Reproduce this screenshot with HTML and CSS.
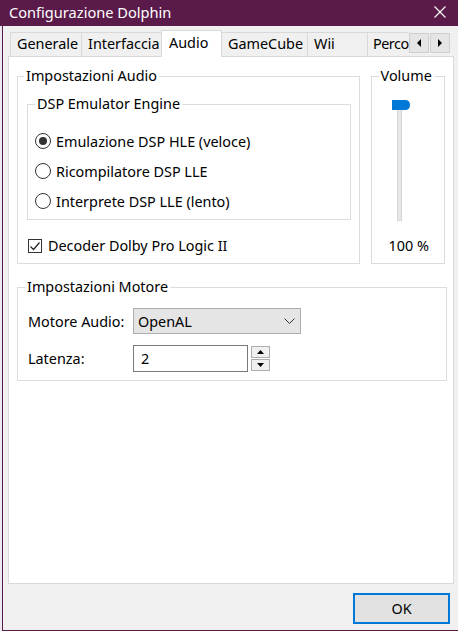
FILE: index.html
```html
<!DOCTYPE html>
<html>
<head>
<meta charset="utf-8">
<link rel="stylesheet" href="styles.css">
</head>
<body>
<div class="window">
  <div class="titlebar">
    <span class="title">Configurazione Dolphin</span>
    <svg class="close" width="12" height="12" viewBox="0 0 12 12"><path d="M0.5 0.5 L11.5 11.5 M11.5 0.5 L0.5 11.5" stroke="#fff" stroke-width="1.1" fill="none"/></svg>
  </div>
  <div class="client">
    <div class="tabs">
      <div class="tab t-gen">Generale</div>
      <div class="tab t-int">Interfaccia</div>
      <div class="tab active t-aud">Audio</div>
      <div class="tab t-gc">GameCube</div>
      <div class="tab t-wii">Wii</div>
      <div class="tab t-per">Perco</div>
      <div class="scroll">
        <div class="sbtn"><svg width="6" height="8" viewBox="0 0 6 8"><path d="M5 0 L5 8 L1 4 Z" fill="#000"/></svg></div>
        <div class="sbtn"><svg width="6" height="8" viewBox="0 0 6 8"><path d="M1 0 L1 8 L5 4 Z" fill="#000"/></svg></div>
      </div>
    </div>
    <div class="panel">
      <div class="row1">
        <fieldset class="gb audio">
          <legend>Impostazioni Audio</legend>
          <fieldset class="gb dsp">
            <legend>DSP Emulator Engine</legend>
            <div class="radio"><span class="rcircle on"></span>Emulazione DSP HLE (veloce)</div>
            <div class="radio"><span class="rcircle"></span>Ricompilatore DSP LLE</div>
            <div class="radio"><span class="rcircle"></span>Interprete DSP LLE (lento)</div>
          </fieldset>
          <div class="check"><span class="cbox"><svg width="12" height="12" viewBox="0 0 12 12"><path d="M1.5 6.5 L4.5 9.5 L10.5 2.5" stroke="#222" stroke-width="1.2" fill="none"/></svg></span>Decoder Dolby Pro Logic II</div>
        </fieldset>
        <fieldset class="gb volume">
          <legend>Volume</legend>
          <div class="slider">
            <div class="track"></div>
            <svg class="thumb" width="19" height="10" viewBox="0 0 19 10"><path d="M0 0 H13 Q18 0 18 5 Q18 10 13 10 H0 Z" fill="#0078d7"/></svg>
          </div>
          <div class="pct">100 %</div>
        </fieldset>
      </div>
      <fieldset class="gb motore">
        <legend>Impostazioni Motore</legend>
        <div class="frow">
          <span class="lbl">Motore Audio:</span>
          <div class="select"><span>OpenAL</span><svg width="11" height="7" viewBox="0 0 11 7"><path d="M0.5 0.5 L5.5 5.5 L10.5 0.5" stroke="#333" stroke-width="1" fill="none"/></svg></div>
        </div>
        <div class="frow">
          <span class="lbl">Latenza:</span>
          <div class="input">2</div>
          <div class="spin">
            <div class="sp"><svg width="7" height="4" viewBox="0 0 7 4"><path d="M0 4 L7 4 L3.5 0 Z" fill="#000"/></svg></div>
            <div class="sp"><svg width="7" height="4" viewBox="0 0 7 4"><path d="M0 0 L7 0 L3.5 4 Z" fill="#000"/></svg></div>
          </div>
        </div>
      </fieldset>
    </div>
    <div class="footer">
      <button class="ok">OK</button>
    </div>
  </div>
</div>
</body>
</html>
```

FILE: styles.css
```css
* { box-sizing: border-box; }
html, body { margin: 0; padding: 0; }
body {
  width: 458px;
  height: 631px;
  background: #e9e9ef;
  font-family: "Noto Sans", "Open Sans", sans-serif;
  font-size: 14.4px;
  color: #000;
  overflow: hidden;
}
.window {
  display: flex;
  flex-direction: column;
  height: 631px;
  margin-left: 2px;
}
.titlebar {
  height: 26px;
  background: #5b1b4a;
  display: flex;
  align-items: center;
  justify-content: space-between;
  padding: 0 11px 2px 9px;
  margin-left: -2px;
}
.title {
  color: #fff;
  font-size: 14.6px;
}
.close { margin-right: 1px; }
.client {
  flex: 1;
  background: #f0f0f0;
  border-left: 1px solid #5b1b4a;
  border-bottom: 1px solid #5b1b4a;
  display: flex;
  flex-direction: column;
}
.tabs {
  display: flex;
  align-items: flex-end;
  height: 30px;
  padding-left: 7px;
  position: relative;
  z-index: 1;
}
.tab {
  height: 24px;
  border: 1px solid #d9d9d9;
  border-right: none;
  border-bottom: none;
  background: #f0f0f0;
  padding: 0 0 0 6px;
  line-height: 22px;
  white-space: nowrap;
  overflow: hidden;
}
.t-gen { width: 71px; }
.t-int { width: 80px; }
.t-aud {
  width: 61px;
  height: 27px;
  background: #fff;
  border-right: 1px solid #d9d9d9;
  margin-bottom: -1px;
  line-height: 24px;
  padding-left: 7px;
}
.t-gc { width: 85px; border-left: none; }
.t-wii { width: 60px; }
.t-per { width: 42px; padding-left: 5px; letter-spacing: -0.5px; }
.scroll {
  display: flex;
  gap: 1px;
  align-self: flex-start;
  margin-top: 7px;
}
.sbtn {
  width: 20px;
  height: 20px;
  background: #e5e5e5;
  border: 1px solid #cfcfcf;
  display: flex;
  align-items: center;
  justify-content: center;
}
.panel {
  margin-left: 5px;
  width: 446px;
  height: 528px;
  background: #fff;
  border: 1px solid #d9d9d9;
  padding: 9px 8px 0 8px;
}
.row1 {
  display: flex;
  gap: 11px;
}
.gb {
  margin: 0;
  border: 1px solid #dcdcdc;
  padding: 0;
  min-width: 0;
}
.gb legend {
  padding: 0 2px;
  margin-left: 6px;
  line-height: 20px;
}
.audio {
  width: 345px;
  height: 198px;
  padding: 8px 8px 0 9px;
}
.audio > legend { margin-left: -3px; }
.dsp {
  height: 126px;
  padding: 12px 0 0 7px;
}
.dsp legend { margin-left: 0; }
.radio {
  display: flex;
  align-items: center;
  height: 30px;
}
.rcircle {
  width: 16px;
  height: 16px;
  border: 1px solid #333;
  border-radius: 50%;
  margin-right: 5px;
  display: flex;
  align-items: center;
  justify-content: center;
}
.rcircle.on::after {
  content: "";
  width: 8px;
  height: 8px;
  border-radius: 50%;
  background: #333;
}
.check {
  display: flex;
  align-items: center;
  margin-top: 16px;
  margin-left: 1px;
}
.cbox {
  width: 14px;
  height: 14px;
  border: 1px solid #333;
  margin-right: 6px;
  display: flex;
  align-items: center;
  justify-content: center;
}
.volume {
  width: 75px;
  height: 198px;
  display: flex;
  flex-direction: column;
  align-items: flex-start;
}
.volume legend { margin-left: 7px; }
.slider {
  position: relative;
  width: 19px;
  height: 121px;
  margin-top: 14px;
  margin-left: 20px;
}
.track {
  position: absolute;
  left: 5px;
  top: 0;
  width: 5px;
  height: 121px;
  background: #e7e7e7;
  border: 1px solid #d6d6d6;
}
.thumb {
  position: absolute;
  left: 0;
  top: 0;
}
.pct {
  margin-top: 15px;
  margin-left: 17px;
}
.motore {
  margin-top: 13px;
  width: 430px;
  height: 104px;
  padding: 11px 0 0 10px;
}
.motore > legend { margin-left: -3px; }
.frow {
  display: flex;
  align-items: center;
  height: 26px;
  margin-bottom: 11px;
}
.lbl { width: 105px; }
.select {
  width: 168px;
  height: 26px;
  background: #e5e5e5;
  border: 1px solid #adadad;
  display: flex;
  align-items: center;
  justify-content: space-between;
  padding: 0 5px 0 4px;
}
.input {
  width: 115px;
  height: 27px;
  border: 1px solid #7a7a7a;
  padding-left: 7px;
  line-height: 25px;
}
.spin {
  margin-left: 3px;
  display: flex;
  flex-direction: column;
  gap: 1px;
}
.sp {
  width: 19px;
  height: 12px;
  background: #f0f0f0;
  border: 1px solid #adadad;
  display: flex;
  align-items: center;
  justify-content: center;
}
.footer {
  flex: 1;
  display: flex;
  justify-content: flex-end;
  align-items: flex-start;
  padding: 9px 8px 0 0;
}
.ok {
  width: 97px;
  height: 31px;
  background: #e1e1e1;
  border: 2px solid #0078d7;
  font-family: "Noto Sans", "Open Sans", sans-serif;
  font-size: 14.4px;
  color: #000;
  padding: 0;
}
```
